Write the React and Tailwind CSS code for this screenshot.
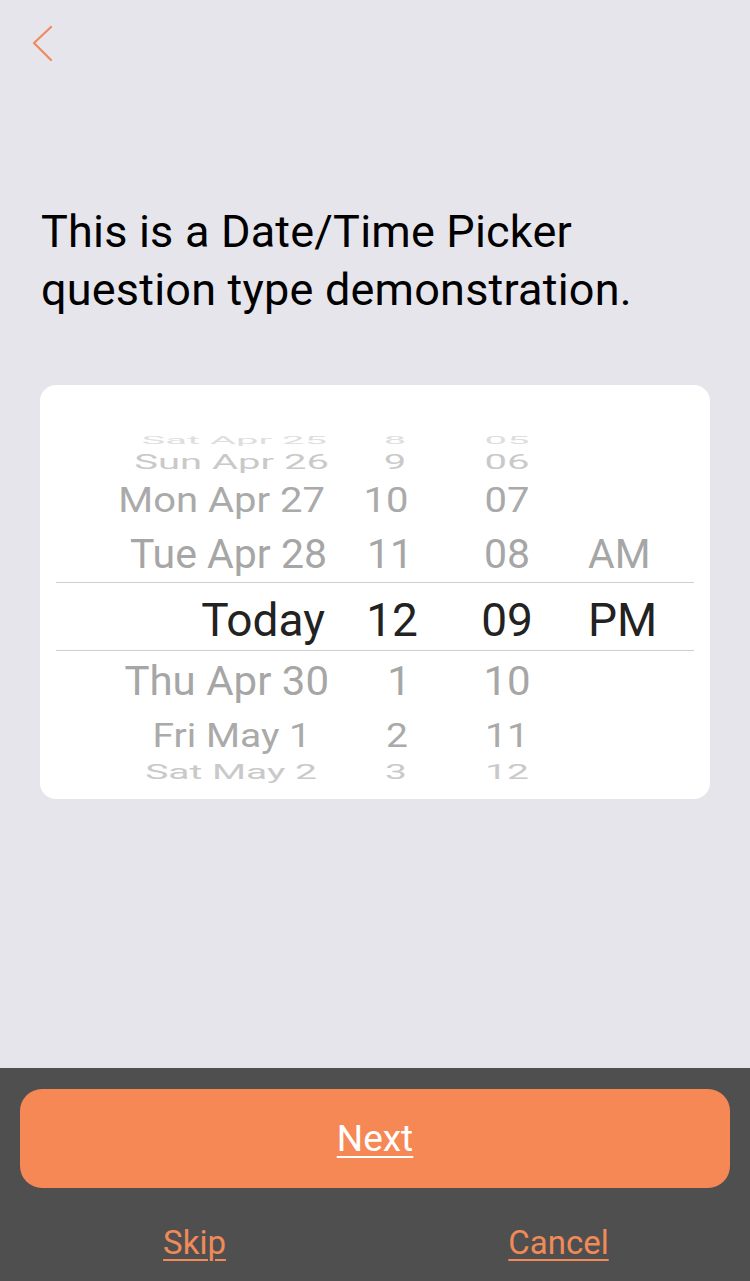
const rows = [
  { h: 'h-[16px]', date: 'Sat Apr 25', hour: '8', min: '05', ap: '', size: 'text-[40px]', scale: 'scale-y-[0.26]', color: 'text-[#dedede]', shift: 'translate-x-[2px]', hshift: 'translate-x-[3px]' },
  { h: 'h-[26px]', date: 'Sun Apr 26', hour: '9', min: '06', ap: '', size: 'text-[40px]', scale: 'scale-y-[0.5]', color: 'text-[#c9c9c9]', shift: 'translate-x-[4px]', hshift: 'translate-x-[3px]' },
  { h: 'h-[52px]', date: 'Mon Apr 27', hour: '10', min: '07', ap: '', size: 'text-[40px]', scale: 'scale-y-[0.86]', color: 'text-[#aaaaaa]', shift: '', hshift: '-translate-x-[6px]' },
  { h: 'h-[55px]', date: 'Tue Apr 28', hour: '11', min: '08', ap: 'AM', size: 'text-[41px]', scale: 'scale-y-[1]', color: 'text-[#a6a6a6]', shift: 'translate-x-[2px]', hshift: '-translate-x-[2px]' },
];

const rowsBelow = [
  { h: 'h-[62px]', date: 'Thu Apr 30', hour: '1', min: '10', ap: '', size: 'text-[42px]', scale: 'scale-y-[0.96]', color: 'text-[#a6a6a6]', shift: 'translate-x-[4px]', hshift: 'translate-x-[7px]' },
  { h: 'h-[46px]', date: 'Fri May 1', hour: '2', min: '11', ap: '', size: 'text-[39px]', scale: 'scale-y-[0.86]', color: 'text-[#aaaaaa]', shift: '-translate-x-[14px]', hshift: 'translate-x-[5px]' },
  { h: 'h-[26px]', date: 'Sat May 2', hour: '3', min: '12', ap: '', size: 'text-[39px]', scale: 'scale-y-[0.52]', color: 'text-[#c9c9c9]', shift: '-translate-x-[8px]', hshift: 'translate-x-[4px]' },
];

function Row({ r }) {
  return (
    <div className={`flex items-center ${r.h} ${r.color} ${r.size} leading-none`}>
      <div className={`w-[269px] text-right whitespace-nowrap ${r.scale} ${r.shift}`}>{r.date}</div>
      <div className={`ml-[19px] w-[96px] text-center ${r.scale} ${r.hshift}`}>{r.hour}</div>
      <div className={`ml-[19px] w-[96px] text-center ${r.scale}`}>{r.min}</div>
      <div className={`ml-[33px] ${r.scale}`}>{r.ap}</div>
    </div>
  );
}

export default function App() {
  return (
    <div className="w-[750px] h-[1281px] bg-[#e6e5eb] flex flex-col font-['Roboto',sans-serif]">
      <div className="flex-1">
        <div className="pt-[25px] pl-[31px]">
          <svg width="24" height="36" viewBox="0 0 24 36" fill="none">
            <polyline points="20,2 3,18 20,35" stroke="#ef8a5e" strokeWidth="2.2" strokeLinecap="round" strokeLinejoin="round" />
          </svg>
        </div>

        <h1 className="mt-[142px] px-[41px] text-[45px] leading-[58px] tracking-[0.2px] text-black font-normal">
          This is a Date/Time Picker
          <br />
          question type demonstration.
        </h1>

        <div className="mt-[66px] mx-[40px] h-[414px] rounded-[16px] bg-white pt-[48px] px-[16px] overflow-hidden">
          {rows.map((r) => (
            <Row key={r.date} r={r} />
          ))}
          <div className="flex items-center h-[69px] border-y border-[#cfcfcf] text-[46px] leading-none text-[#222222] pt-[6px]">
            <div className="w-[269px] text-right">Today</div>
            <div className="ml-[19px] w-[96px] text-center">12</div>
            <div className="ml-[19px] w-[96px] text-center">09</div>
            <div className="ml-[33px]">PM</div>
          </div>
          {rowsBelow.map((r) => (
            <Row key={r.date} r={r} />
          ))}
        </div>
      </div>

      <div className="h-[213px] bg-[#4f4f4f] pt-[21px] px-[20px]">
        <button className="w-full h-[99px] rounded-[22px] bg-[#f68855] text-white text-[37px] underline underline-offset-[5px] decoration-2">
          Next
        </button>
        <div className="grid grid-cols-2 mt-[30px] h-[46px] items-center text-[33px] text-[#f08a58]">
          <button className="underline underline-offset-[5px] decoration-2 -ml-[6px]">Skip</button>
          <button className="underline underline-offset-[5px] decoration-2 ml-[12px]">Cancel</button>
        </div>
      </div>
    </div>
  );
}
